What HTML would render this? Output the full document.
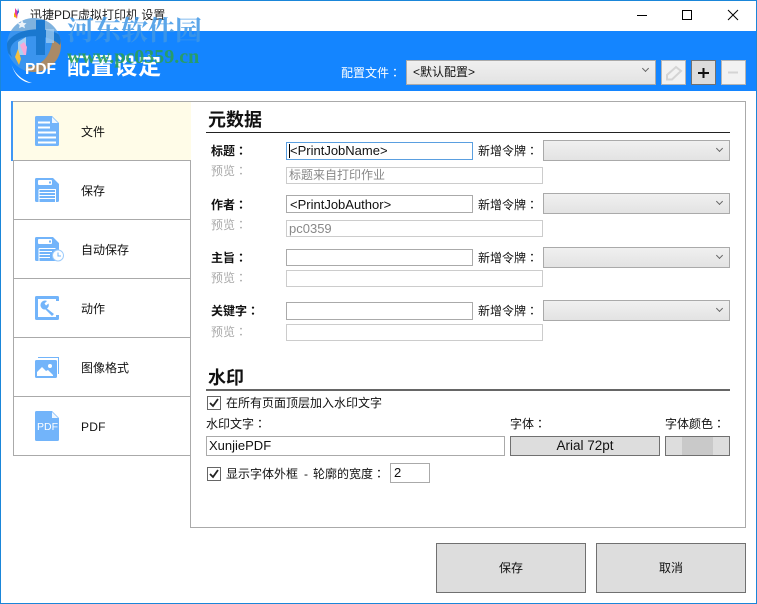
<!DOCTYPE html>
<html><head><meta charset="utf-8"><style>
html,body{margin:0;padding:0;background:#fff}
#w{position:relative;width:757px;height:604px;overflow:hidden;background:#fff;font:12px "Liberation Sans","Noto Sans CJK SC",sans-serif;color:#111}
#w div,#w span.a{position:absolute;box-sizing:border-box;white-space:nowrap}
.k{font-family:"Noto Sans CJK TC",sans-serif}
.t{line-height:16px;height:16px}
.lb{font-weight:bold;font-size:12px}
.g{color:#aaa}
.i{background:#fff;border:1px solid #aaa;line-height:16px;padding-left:3px;font-size:13px}
.p{background:#fff;border:1px solid #ccc;line-height:16px;padding-left:2px;color:#888;font-size:12px}
.c{background:linear-gradient(#f0f0f0,#e3e3e3);border:1px solid #aaa}
.c:after{content:"";position:absolute;right:7px;top:5px;width:4px;height:4px;border-right:1px solid #666;border-bottom:1px solid #666;transform:rotate(45deg)}
.n{left:13px;width:178px;height:60px;border:1px solid #aaa;background:#fff}
.nt{left:81px;font-size:12px;line-height:16px;height:16px}
.b{background:#ddd;border:1px solid #707070;text-align:center}
.cb{width:14px;height:14px;border:1px solid #666;background:#fff}
</style></head><body><div id="w">
<div style="left:0;top:0;width:757px;height:604px;border:1px solid #1a86d9;z-index:9;pointer-events:none"></div>

<!-- title bar -->
<div class="t" style="left:30px;top:7px;font-size:12px;color:#222">迅捷PDF虚拟打印机 设置</div>
<svg style="position:absolute;left:12px;top:7px" width="10" height="13"><path d="M3 1l3 4-1 7-2-4z" fill="#e83ca0"/><path d="M6 1l1 4-2 3z" fill="#1a5fd0"/><path d="M2 5l3 6-3-1z" fill="#f5b800"/></svg>
<svg style="position:absolute;left:630px;top:5px" width="120" height="20" fill="none" stroke="#000" stroke-width="1">
<path d="M7 10.500H17"/><rect x="52.500" y="5.500" width="9" height="9"/><path d="M98 5l10 10M108 5l-10 10"/></svg>

<!-- blue band -->
<div style="left:1px;top:31px;width:755px;height:60px;background:#1485ff"></div>

<div style="left:67px;top:53px;color:#fff;font-size:23px;line-height:26px;font-weight:bold;letter-spacing:.7px">配置设定</div>

<!-- watermark logo -->
<svg style="position:absolute;left:0;top:5px" width="70" height="85">
<defs><clipPath id="cc"><circle cx="34" cy="40" r="27"/></clipPath></defs>
<g clip-path="url(#cc)">
<rect x="0" y="10" width="70" height="16" fill="#7fb2de"/>
<rect x="0" y="26" width="70" height="45" fill="#3a94ee"/>
<path d="M62 30A28 28 0 0 1 25 67L26 62C42 62 53 50 53 28z" fill="#a98a66"/>
<path d="M5 45C6 30 25 22 46 25 52 26 58 28 62 32L60 40C50 30 28 28 16 36 10 40 9 46 12 52z" fill="#1a78cf"/>
<path d="M36 15H45V50H36z" fill="#1a78cf"/>
<path d="M18 37l8-5V50H18z" fill="#a8d2f4"/>
<path d="M46 24h8v14h-8z" fill="#a8d2f4" opacity=".7"/>
</g>
<path d="M20 40l4 10 2 0 1-8-3-5z" fill="#f7a8d8"/>
<path d="M15 52l3-8 3 10-2 6z" fill="#f6c040"/>
<path d="M11 57C13 68 22 75 32 78 24 78 14 72 11 57z" fill="#fff"/>
<path d="M22 15l1.500 3 3 .3-2.200 2 .7 3-3-1.600-3 1.600 .7-3-2.200-2 3-.3z" fill="#fff" opacity=".85"/>
</svg>
<div style="left:25px;top:60px;color:#fff;font-weight:bold;font-size:15.500px;line-height:20px">PDF</div>
<div style="left:67px;top:13px;font-family:'Noto Serif CJK SC',serif;font-weight:bold;font-size:27px;line-height:32px;color:#3f97e6;opacity:.85">河东软件园</div>
<div style="left:67px;top:47px;font-family:'Liberation Serif',serif;font-weight:bold;font-size:20px;line-height:20px;color:#2a9f5a;opacity:.9">www.pc0359.cn</div>

<!-- profile -->
<div class="t" style="left:341px;top:65px;color:#fff">配置文件<span class="k">：</span></div>
<div class="c" style="left:406px;top:60px;width:250px;height:25px"><span class="a" style="left:6px;top:3px;line-height:16px">&lt;默认配置&gt;</span></div>
<div style="left:661px;top:60px;width:25px;height:25px;background:#f2f2f2;border:1px solid #b5b5b5"></div>
<svg style="position:absolute;left:661px;top:60px" width="25" height="25" fill="none" stroke="#d4d4d4" stroke-width="2"><path d="M6 19.500V15L15 7l5 4-9 8.500z"/></svg>
<div style="left:691px;top:60px;width:25px;height:25px;background:#dcdcdc;border:1px solid #707070"></div>
<svg style="position:absolute;left:691px;top:60px" width="25" height="25" stroke="#111" stroke-width="2"><path d="M7 13H18M12.500 8V18"/></svg>
<div style="left:721px;top:60px;width:25px;height:25px;background:#f2f2f2;border:1px solid #b5b5b5"></div>
<svg style="position:absolute;left:721px;top:60px" width="25" height="25" stroke="#d4d4d4" stroke-width="2"><path d="M7 12.500H17"/></svg>

<!-- content panel -->
<div style="left:190px;top:101px;width:556px;height:427px;border:1px solid #aaa;background:#fff"></div>

<!-- nav -->
<div class="n" style="top:160px"></div>
<div class="n" style="top:219px"></div>
<div class="n" style="top:278px"></div>
<div class="n" style="top:337px"></div>
<div class="n" style="top:396px"></div>
<div style="left:13px;top:101px;width:178px;height:60px;background:#fffce8;border-top:1px solid #aaa;border-bottom:1px solid #aaa"></div>
<div style="left:11px;top:101px;width:2px;height:60px;background:#3f97f5"></div>

<svg style="position:absolute;left:35px;top:116px" width="25" height="31">
<path d="M1.500 0H17L24 7V28.500a1.500 1.500 0 0 1-1.500 1.500H1.500A1.500 1.500 0 0 1 0 28.500V1.500A1.500 1.500 0 0 1 1.500 0z" fill="#72b4fa"/>
<path d="M17 1l6 6h-6z" fill="#eef6ff"/>
<path d="M3 6.500h12M3 11.500h12M3 16.500h18M3 21.500h18M3 26.500h18" stroke="#fff" stroke-width="2"/></svg>
<div class="nt" style="top:124px">文件</div>

<svg style="position:absolute;left:35px;top:178px" width="25" height="25">
<path d="M1.500 0H18L24 6V22.500a1.500 1.500 0 0 1-1.500 1.500H1.500A1.500 1.500 0 0 1 0 22.500V1.500A1.500 1.500 0 0 1 1.500 0z" fill="#72b4fa"/>
<rect x="3" y="2" width="14" height="5" rx="1" fill="#fff"/><rect x="14" y="3.500" width="2" height="2" fill="#72b4fa"/>
<path d="M4 11.500H20.500V24M4 11.500V24M4 14.500H20.500M4 17.500H20.500M4 20.500H20.500" stroke="#fff" fill="none" stroke-width="1"/></svg>
<div class="nt" style="top:183px">保存</div>

<svg style="position:absolute;left:35px;top:237px" width="30" height="26">
<path d="M1.500 0H18L24 6V22.500a1.500 1.500 0 0 1-1.500 1.500H1.500A1.500 1.500 0 0 1 0 22.500V1.500A1.500 1.500 0 0 1 1.500 0z" fill="#72b4fa"/>
<rect x="3" y="2" width="14" height="5" rx="1" fill="#fff"/><rect x="14" y="3.500" width="2" height="2" fill="#72b4fa"/>
<path d="M4 11.500H20.500M4 11.500V24M4 14.500H17M4 17.500H15M4 20.500H15" stroke="#fff" fill="none" stroke-width="1"/>
<circle cx="23" cy="18.500" r="5.500" fill="#fff" stroke="#9ccbfb" stroke-width="1"/>
<path d="M23 15.500V19H26" stroke="#72b4fa" fill="none"/></svg>
<div class="nt" style="top:242px">自动保存</div>

<svg style="position:absolute;left:35px;top:296px" width="25" height="25">
<path d="M24 5V1.500A1.500 1.500 0 0 0 22.500 0H1.500A1.500 1.500 0 0 0 0 1.500V22.500A1.500 1.500 0 0 0 1.500 24H22.500A1.500 1.500 0 0 0 24 22.500V19H21V21H3V3H21V5z" fill="#72b4fa"/>
<path d="M6 7a4.500 4.500 0 0 1 6-2l-2.500 2.500 1.500 2 2.500-2a4.500 4.500 0 0 1-1.500 5L19 18l-2 2-6.500-6.500A4.500 4.500 0 0 1 6 7z" fill="#72b4fa"/></svg>
<div class="nt" style="top:301px">动作</div>

<svg style="position:absolute;left:35px;top:356px" width="25" height="22">
<path d="M3 2V1H24V18H23V2z" fill="#72b4fa"/>
<rect x="0" y="4" width="22" height="18" rx="1.500" fill="#72b4fa"/>
<path d="M2 16l5-5 4 4 2-1 5 5v1H2z" fill="#fff"/>
<circle cx="15" cy="10" r="2" fill="#fff"/></svg>
<div class="nt" style="top:360px">图像格式</div>

<svg style="position:absolute;left:35px;top:411px" width="24" height="30">
<path d="M1.500 0H17L24 7V28.500a1.500 1.500 0 0 1-1.500 1.500H1.500A1.500 1.500 0 0 1 0 28.500V1.500A1.500 1.500 0 0 1 1.500 0z" fill="#72b4fa"/>
<path d="M17 1l6 6h-6z" fill="#eef6ff"/></svg>
<div style="left:37px;top:420px;font-size:10.500px;line-height:14px;color:#fff">PDF</div>
<div class="nt" style="top:419px;letter-spacing:.2px">PDF</div>

<div style="left:208px;top:109px;font-size:18px;font-weight:bold;line-height:22px;color:#111">元数据</div>
<div style="left:206px;top:132px;width:524px;height:1px;background:#222"></div>

<!-- row 1 -->
<div class="t lb" style="left:211px;top:143px">标题<span class="k">：</span></div>
<div class="i" style="left:286px;top:142px;width:187px;height:18px;border-color:#5a9fe0">&lt;PrintJobName&gt;</div>
<div style="left:289px;top:144px;width:1px;height:14px;background:#000"></div>
<div class="t" style="left:478px;top:143px">新增令牌<span class="k">：</span></div>
<div class="c" style="left:543px;top:140px;width:187px;height:21px"></div>
<div class="t g" style="left:211px;top:163px">预览<span class="k">：</span></div>
<div class="p" style="left:286px;top:167px;width:257px;height:17px;line-height:15px">标题来自打印作业</div>

<!-- row 2 -->
<div class="t lb" style="left:211px;top:197px">作者<span class="k">：</span></div>
<div class="i" style="left:286px;top:195px;width:187px;height:18px;line-height:17px">&lt;PrintJobAuthor&gt;</div>
<div class="t" style="left:478px;top:197px">新增令牌<span class="k">：</span></div>
<div class="c" style="left:543px;top:193px;width:187px;height:21px"></div>
<div class="t g" style="left:211px;top:217px">预览<span class="k">：</span></div>
<div class="p" style="left:286px;top:220px;width:257px;height:17px;line-height:15px;font-size:13px">pc0359</div>

<!-- row 3 -->
<div class="t lb" style="left:211px;top:250px">主旨<span class="k">：</span></div>
<div class="i" style="left:286px;top:249px;width:187px;height:17px"></div>
<div class="t" style="left:478px;top:250px">新增令牌<span class="k">：</span></div>
<div class="c" style="left:543px;top:247px;width:187px;height:21px"></div>
<div class="t g" style="left:211px;top:270px">预览<span class="k">：</span></div>
<div class="p" style="left:286px;top:270px;width:257px;height:17px"></div>

<!-- row 4 -->
<div class="t lb" style="left:211px;top:303px">关键字<span class="k">：</span></div>
<div class="i" style="left:286px;top:302px;width:187px;height:18px"></div>
<div class="t" style="left:478px;top:303px">新增令牌<span class="k">：</span></div>
<div class="c" style="left:543px;top:300px;width:187px;height:21px"></div>
<div class="t g" style="left:211px;top:324px">预览<span class="k">：</span></div>
<div class="p" style="left:286px;top:324px;width:257px;height:17px"></div>

<!-- watermark section -->
<div style="left:208px;top:367px;font-size:18px;font-weight:bold;line-height:22px;color:#111">水印</div>
<div style="left:206px;top:389px;width:524px;height:2px;background:#666"></div>
<div class="cb" style="left:207px;top:396px"></div>
<svg style="position:absolute;left:207px;top:396px" width="14" height="14" fill="none" stroke="#222" stroke-width="1.800"><path d="M3 7l3 3 5-7"/></svg>
<div class="t" style="left:226px;top:395px">在所有页面顶层加入水印文字</div>
<div class="t" style="left:206px;top:416px">水印文字<span class="k">：</span></div>
<div class="t" style="left:510px;top:416px">字体<span class="k">：</span></div>
<div class="t" style="left:665px;top:416px">字体颜色<span class="k">：</span></div>
<div class="i" style="left:206px;top:436px;width:299px;height:20px;line-height:18px;padding-left:2px">XunjiePDF</div>
<div class="b" style="left:510px;top:436px;width:150px;height:20px;line-height:18px;font-size:13.500px">Arial 72pt</div>
<div class="b" style="left:665px;top:436px;width:65px;height:20px"></div>
<div style="left:682px;top:437px;width:31px;height:18px;background:#c9c9c9"></div>
<div class="cb" style="left:207px;top:467px"></div>
<svg style="position:absolute;left:207px;top:467px" width="14" height="14" fill="none" stroke="#222" stroke-width="1.800"><path d="M3 7l3 3 5-7"/></svg>
<div class="t" style="left:226px;top:466px">显示字体外框</div>
<div class="t" style="left:304px;top:466px">-</div>
<div class="t" style="left:313px;top:466px">轮廓的宽度<span class="k">：</span></div>
<div class="i" style="left:390px;top:463px;width:40px;height:20px;line-height:18px">2</div>

<!-- bottom buttons -->
<div class="b" style="left:436px;top:543px;width:150px;height:50px;line-height:48px">保存</div>
<div class="b" style="left:596px;top:543px;width:150px;height:50px;line-height:48px">取消</div>
</div></body></html>
